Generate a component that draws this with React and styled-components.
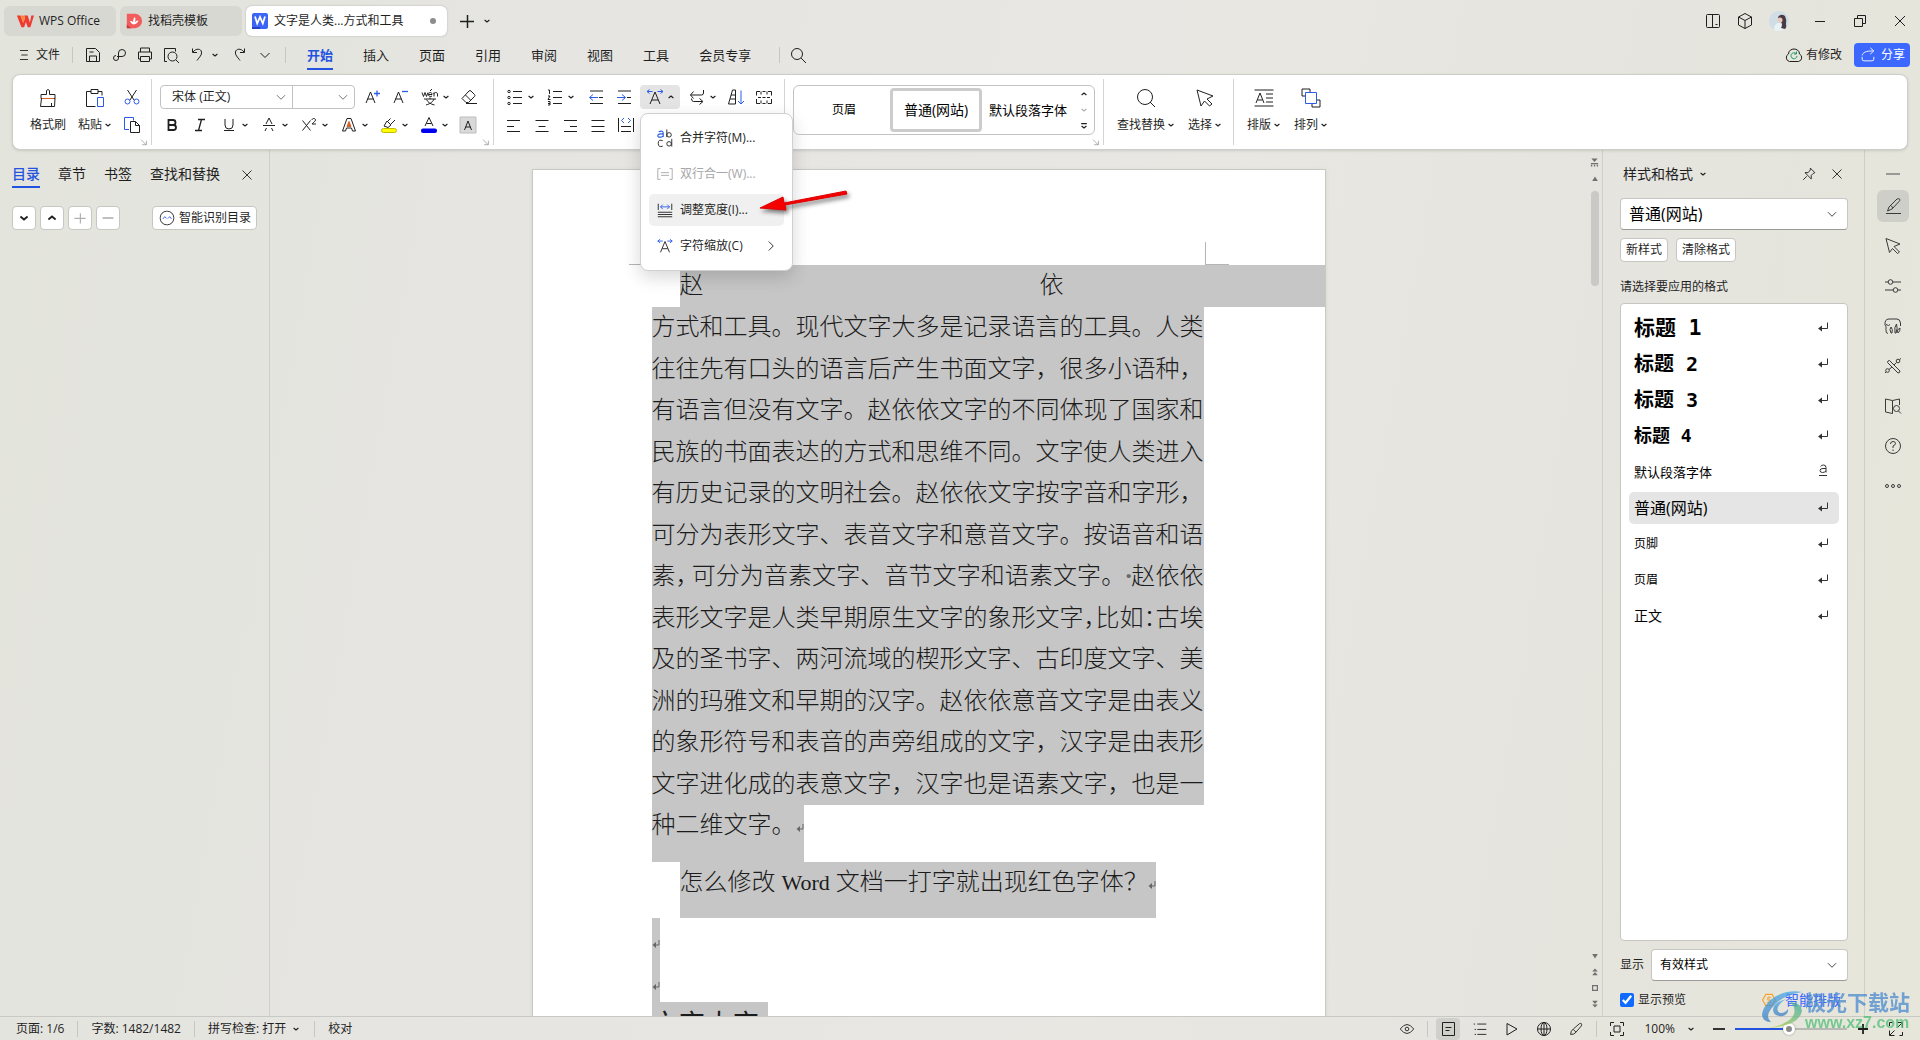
import React, { useState } from "react";
import styled, { createGlobalStyle, css } from "styled-components";

const BLUE = "#2b5be8";

const icons = {
    wps: <><path d="M1 4h4l3 8 2-5-1-3h4l2.500 8 1.500-8h3l-4 13h-3l-2-6-2 6h-3z" fill="#f0392f" stroke="none" /><path d="M5 4l3 8 2-5-1-3z" fill="#ff8a3c" stroke="none" /></>,
    docer: <><path d="M2 2h9a8 8 0 0 1 0 16h-9z" fill="#f25c5c" stroke="none" /><path d="M2 14l5 4h-5z" fill="#c93838" stroke="none" /><path d="M9.500 14c-2-1-3-2-4-4 2 0 3 .5 3.500 1.500 0-2 0-4 2-6 1 2 .5 4 0 6 1-1.500 2-2 4-2-1 2.500-2.500 4-5.500 4.500z" fill="#fff" stroke="none" /></>,
    word: <><rect x="2" y="2" width="16" height="16" rx="2" fill="#3c64f5" stroke="none" /><path d="M2 16h8v2h-8z" fill="#2143c4" stroke="none" /><path d="M5 5.500l2.200 7 2.800-6.500 2.800 6.500 2.200-7" stroke="#fff" strokeWidth="1.800" /></>,
    plus: <path d="M3 10.500h14M10.500 4v13" strokeWidth="1.500" />,
    burger: <path d="M5.500 5h9M7 10h7M5.500 15h9" />,
    save: <><path d="M3.500 3.500h9l4 4v9h-13z" /><path d="M6.500 16v-5h7v5M6.500 7h4" /></>,
    link: <path d="M8 11.500h5a3.500 3.500 0 1 0-3.500-3.500v5a2.500 2.500 0 1 1-2.500-2.500" />,
    print: <><path d="M5.500 7v-4h9v4M5.500 14h-2v-7h13v7h-2" /><path d="M5.500 11.500h9v5h-9z" /></>,
    preview: <><path d="M6 16.500h-2.500v-13h11v3" /><circle cx="11.500" cy="11.500" r="4.500" /><path d="M15 15l3 3" /></>,
    undo: <path d="M4.500 3.500v4h4.500M5 7c3-4 8-3.500 8.500 0 .5 3-2 5-4.500 8.500" />,
    redo: <path d="M15.500 3.500v4h-4.500M15 7c-3-4-8-3.500-8.500 0-.5 3 2 5 4.500 8.500" />,
    down: <path d="M5.500 8l4.500 4.500 4.500-4.500" />,
    search: <><circle cx="9" cy="9" r="5.500" /><path d="M13 13l5 5" /></>,
    panes: <><rect x="3.500" y="3.500" width="13" height="13" rx="1" /><path d="M9.500 4v12M12.500 13.500h2" /></>,
    cube: <><path d="M10 2.500l6.500 3.500v8l-6.500 3.500-6.500-3.500v-8z" /><path d="M3.500 6l6.500 3.500 6.500-3.500M10 9.500v8" /></>,
    min: <path d="M5 10.500h10" />,
    restore: <><path d="M4.500 7.500h8v8h-8z" /><path d="M7.500 7.500v-3h8v8h-3" /></>,
    close: <path d="M5 5l10 10M15 5l-10 10" />,
    cloud: <><path d="M5.500 16.500a4 4 0 0 1-1-7.500c0-3.500 3-5 5.500-5s5.500 1.500 5.500 5a4 4 0 0 1-1 7.500z" /><path d="M12 8.500a3 3 0 1 0 1 2.500M12.500 6.500v2.500h-2.500" stroke="#1f9d62" /></>,
    share: <><path d="M3.500 12v2.500q0 2 2 2h9q2 0 2-2v-2.500" /><path d="M3.500 10.500c1-3.500 4-5 12-5M12.500 2l4 3.500-4 3.500" /></>,
    eye: <><path d="M2.500 10q7.500-10 15 0-7.500 10-15 0z" /><circle cx="10" cy="10" r="2" /></>,
    painter: <><path d="M8.500 6.500v-4q1.500-2 3 0v4h5.500v4h-14v-4z" /><path d="M3.500 10.500l-1 8h14l.5-8M13.500 15v3" /><path d="M4 10.500h12" stroke="#d4622b" /></>,
    paste: <><path d="M6 3.500h-4.500v15h9M13 3.500h4v4" /><path d="M6 1.500h7v4h-7z" /><path d="M12.500 9.500h6v9h-6z" stroke={BLUE} /></>,
    cut: <><path d="M5.500 3l6.500 10M14.500 3l-6.500 10" /><circle cx="5.500" cy="14.500" r="2.500" stroke={BLUE} /><circle cx="14.500" cy="14.500" r="2.500" stroke={BLUE} /></>,
    copy: <><path d="M7 14.500h-4.500v-12h9v3" stroke={BLUE} /><path d="M8.500 6.500h5l4 4v7h-9z" /><path d="M13.500 6.500v4h4" /></>,
    grow: <><path d="M3 16l4.500-11 4.500 11M4.500 12h6" /><path d="M11 6.500h6M14 3.500v6" stroke={BLUE} strokeWidth="1.300" /></>,
    shrink: <><path d="M3 16l4.500-11 4.500 11M4.500 12h6" /><path d="M11 4.500h6" stroke={BLUE} strokeWidth="1.300" /></>,
    pinyin: <><path d="M2 5.500l1.500 4 1.500-4 1.500 4 1.500-4M8.500 7.500h3.500c0-3-3.500-2.500-3.500 0 0 2 2 2.500 3.500 1.500M14 9.500v-4M14 7c0-2 3.500-2 3.500 0v2.500M10 4l2-2M4 12h12M10 10.500v1.500M6 18c5-1.500 7-3.500 8-6M6.500 12.500c1.500 3 4 4.500 8 5.500" /></>,
    eraser: <><path d="M3 11.500l7-7.500q1-1 2 0l3.500 3.500q1 1 0 2l-6 6h-2.500z" /><path d="M6.500 8l5 5M7 16.500h11" /></>,
    bold: <path d="M6.500 5h4.500a2.300 2.300 0 0 1 0 5h-4.500zM6.500 10h5a2.500 2.500 0 0 1 0 5h-5z" strokeWidth="1.800" />,
    italic: <path d="M8 4.500h7M5 15.500h7M11.500 4.500l-3 11" strokeWidth="1.300" />,
    underline: <path d="M6 4v6a4 4 0 0 0 8 0v-6M5 15.500h10" />,
    strike: <path d="M4 10.500h12M7 9l3-6 3 6M6 16l1.500-3M14 16l-1.500-3" />,
    sup: <path d="M3.500 5.500l8 10M11.500 5.500l-8 10M13 5c0-2 3.500-2 3.500 0 0 1.500-2 2-3.500 4h4" />,
    effect: <><path d="M3.500 16l4.500-12.500h4l4.500 12.500h-3l-1-3h-5l-1 3z" /><path d="M8 11.500l2-5 2 5z" fill="#d4622b" stroke="#d4622b" /></>,
    marker: <><path d="M5 11l3-5 4 4-3 2.500zM8.500 6.500l3-3M11 10l5-5" /><rect x="2.500" y="13.500" width="15" height="4" rx="2" fill="#ffff00" stroke="#c5b800" /></>,
    color: <><path d="M6 11l4-8.500 4 8.500M7.500 8.500h5" /><rect x="2" y="13.500" width="16" height="4.500" rx="2" fill="#0000f0" stroke="none" /></>,
    shade: <><path d="M2 2h16v16h-16z" fill="#d9d9d9" stroke="#bdbdbd" /><path d="M6.500 15l3.500-9 3.500 9M7.500 12h5" /></>,
    bullets: <><path d="M8 4.500h9M8 10.500h9M8 16.500h9" /><circle cx="4" cy="4.500" r="1.200" /><circle cx="4" cy="10.500" r="1.200" /><circle cx="4" cy="16.500" r="1.200" /></>,
    numbers: <path d="M8 4.500h9M8 10.500h9M8 16.500h9M3 3h1.500v4M3 9h2l-2 3.500h2.500M3 14.500h2v3.500h-2M3 16.500h2" />,
    outdent: <><path d="M4 4h13M13 10.500h4M4 16.500h13" /><path d="M12 10.500h-8M7 7.500l-3.500 3 3.500 3" stroke={BLUE} /></>,
    indent: <><path d="M4 4h13M13 10.500h4M4 16.500h13" /><path d="M3 10.500h8M8 7.500l3.500 3-3.500 3" stroke={BLUE} /></>,
    charWidth: <><path d="M5 17l5-12 5 12M7 13h6" /><path d="M2 4.500h5.500M4.500 2.500l-2.500 2 2.500 2M12.500 4.500h5.500M15.500 2.500l2.500 2-2.500 2" stroke={BLUE} /></>,
    direction: <path d="M16.500 3v3q0 2-2 2h-11M6.500 4.500l-3 3.500 3 3.500M4.500 11.500q0 3 2 3h9M12.500 11.500l3.500 3-3.500 3" />,
    sort: <><path d="M2.500 17l4-14h3v14zM4 12h5M5 8h4" /><path d="M15 3.500v13.500M12 14l3 3 3-3" stroke={BLUE} /></>,
    tabs: <path d="M6 4.500h-3.500v4M2.500 12v4.500h3.500M14 4.500h3.500v4M17.500 12v4.500h-3.500M8.500 4.500h3M8.500 16.500h3M4 10.500h3M8.500 10.500h3M13 10.500h3M7 4.500v3M7 13.500v3M13 4.500v3M13 13.500v3" />,
    left: <path d="M3 5.500h13M3 11.500h7M3 16.500h13" />,
    center: <path d="M3.500 5.500h13M6.500 11.500h7M3.500 16.500h13" />,
    right: <path d="M4 5.500h13M10 11.500h7M4 16.500h13" />,
    justify: <path d="M3.500 5.500h13M3.500 11.500h13M3.500 16.500h13" />,
    spread: <><path d="M2.500 3v14M17.500 3v14M5 11.500h10M5 16.500h10" /><path d="M8 3l-2.500 2.500 2.500 2.500M12 3l2.500 2.500-2.500 2.500" stroke={BLUE} /></>,
    lens: <><circle cx="9" cy="9" r="7.500" /><path d="M14 14l5 5" /></>,
    pointer: <path d="M2 2l16 6-6 3 5 5-2.500 2-5-5-3.500 5z" />,
    typeset: <path d="M.5 2h19M.5 18h19M2 15l4-10 4 10M3.500 12h5M12 6h7M12 10h7M12 14h7" />,
    arrange: <><path d="M4 8h-3v-7h8v3M16 12h3v7h-8v-3" /><path d="M4.500 4.500h11v11h-11z" stroke={BLUE} /></>,
    merge: <><path d="M3 3q5-2 5 2v4M8 5.500h-3q-3 0-3 2 0 2 3 1.500 3 0 3-2" stroke={BLUE} strokeWidth="1.300" /><path d="M12 .5v8.500" /><circle cx="14.500" cy="6.500" r="2.500" /><path d="M7.500 13q-5-2-5 3t5 3M17.500 11v8.500" /><circle cx="14.500" cy="16.500" r="2.500" /></>,
    twoLines: <path d="M5 4h-3v12h3M15 4h3v12h-3M5.500 8.500h9M5.500 11.500h9" />,
    fitWidth: <><path d="M2.500 3v7M17.500 3v7M2 12.500h16M2 15h16M2 17.500h16" /><path d="M5 6.500h10M7.500 4l-2.500 2.500 2.500 2.500M12.500 4l2.500 2.500-2.500 2.500" stroke={BLUE} /></>,
    next: <path d="M7.500 5l5 5-5 5" />,
    chip: <><rect x="2.500" y="2.500" width="15" height="15" rx="7" /><path d="M5.500 11l2-2.500 2 2M11 10.500l2-2 2 2.500" stroke={BLUE} /></>,
    pin: <path d="M11.500 3.500l5 5-2 1-2 2v4l-7-7h3.500l2.500-3zM7.500 12.500l-4 4" />,
    brush: <><path d="M6 11l8-8q2-1 3 .5 0 1-1 2l-7 7.500-4.500 2z" /><path d="M8 9.500l2 2.500M3 17.500h15" /></>,
    cursor: <path d="M3 2.500l14 5.500-6 2.500 5.500 5.500-2 1.500-5-5-3 4z" />,
    sliders: <><path d="M2 6h3M10 6h8M2 14h8M15 14h3" /><circle cx="7.500" cy="6" r="2.300" /><circle cx="12.500" cy="14" r="2.300" /></>,
    plant: <><path d="M5 17.500q-2.500 0-2-4v-3l-1-1.500q-.5-6 4-6h8q3 0 3.500 4v3" /><path d="M3 8.500q3 2 4 0M8 17q-2-4 0-6 2 2 1 6zM12 17q-1-6 1.500-9 1.500 4-.5 9zM14 17q0-4 3-5 .5 3-2 5" /></>,
    tools: <><path d="M6.500 4.500l10.500 10.500q0 2-2 2l-10.500-10.500q0-2 2-2z" /><circle cx="15" cy="5" r="1.800" /><circle cx="4.500" cy="14.500" r="1.800" /><path d="M16.500 3.500l1.500-1M3 16l-1 1M9 11l-3 2.500M11 9l2.500-2.500" /></>,
    book: <><path d="M9.500 4.500l-7-1.500v13l7 1.500v-13l7-1.500v6" /><circle cx="13.500" cy="12.500" r="3" /><path d="M15.500 15l2.500 2.500" /></>,
    help: <><circle cx="10" cy="10" r="7.500" /><path d="M7.500 8q0-2.500 2.500-2.500t2.500 2q0 1.500-2.500 2.500v2M10 13.500v1.500" /></>,
    more: <><circle cx="4" cy="10" r="1.500" /><circle cx="10" cy="10" r="1.500" /><circle cx="16" cy="10" r="1.500" /></>,
    pageView: <path d="M4.500 3.500h12v13h-12zM7.500 8.500h6M7.500 11.500h4" />,
    outline: <path d="M7 4.500h10M7 10.500h10M7 16h10M3 4.500h1.500M4 10.500h1.500M4 16h1.500" />,
    play: <path d="M5 4.500l10 5.500-10 6z" />,
    globe: <><circle cx="10" cy="10" r="6.500" /><ellipse cx="10" cy="10" rx="3" ry="6.500" /><path d="M3.500 10h13M10 3.500v13" /></>,
    pen: <path d="M4 16q0-4 3-6l7-6q3-1 2 2.500l-6 7q-2 3-6 2.500zM7 10.500l3 3" />,
    fit: <path d="M3.500 7v-3.500h3.500M13 3.500h3.500v3.500M16.500 13v3.500h-3.500M7 16.500h-3.500v-3.500M7 7h6v6h-6z" />,
    minusBold: <path d="M4 10h12" strokeWidth="1.800" />,
    plusBold: <path d="M5 10h10M10 5v10" strokeWidth="1.800" />,
    expand: <path d="M11.500 3.500h5v5M16 4l-4.500 4.500M8.500 16.500h-5v-5M4 16l4.500-4.500M3.500 7v-3.500h3M16.500 13v3.500h-3" />,
    enter: <><path d="M14.500 4.500v6h-8" /><path d="M5 10.500l4-3v6z" fill="currentColor" stroke="none" /></>,
    fontMark: <path d="M7.500 4.500q1-1.500 3-1.500 2.500 0 2.500 2.500v5M13 6.500h-3q-3 0-3 2t2.500 2q2 0 3.500-1.500M6 13.500h8" />,
    coin: <><path d="M6 3h8l4 7-4 7h-8l-4-7z" stroke="#f6a32c" strokeWidth="1.500" /><path d="M13 7h-5v3h4v3h-5M10 5v10" stroke="#f6a32c" /></>,
    corner: <path d="M5 6l8 8M14 8v6.500h-7" stroke="#777" />,
    caret: <path d="M4 7.500l6 5 6-5" strokeWidth="3" />,
    caretUp: <path d="M4 12.500l6-5 6 5" strokeWidth="3" />,
    caretLine: <path d="M3 4h14M4 10l6 5 6-5" strokeWidth="3" />,
    triUp: <path d="M10 4l7 11h-14z" fill="currentColor" stroke="none" />,
    triDown: <path d="M10 16l7-11h-14z" fill="currentColor" stroke="none" />,
    pageUp: <path d="M10 1l7 8h-14zM10 10l7 8h-14z" fill="currentColor" stroke="none" />,
    pageDown: <path d="M10 10l7-8h-14zM10 19l7-8h-14z" fill="currentColor" stroke="none" />,
    square: <path d="M4 4h12v12h-12z" strokeWidth="3" />,
    ruler: <path d="M3 1h14l-7 8zM2 11h16v3h-16zM2 15h3v4h-3zM8.500 15h3v4h-3zM15 15h3v4h-3z" fill="currentColor" stroke="none" />,
};

const Svg = styled.svg`
    width: ${p => p.$size}px;
    height: ${p => p.$size}px;
    flex: none;
    display: block;
    fill: none;
    stroke: currentColor;
`;

const Icon = ({ name, size = 20 }) => (
    <Svg $size={size} viewBox="0 0 20 20" aria-hidden="true">{icons[name]}</Svg>
);

const mainTabs = ["开始", "插入", "页面", "引用", "审阅", "视图", "工具", "会员专享"];

const Half = styled.span`
    font-feature-settings: "halt";
    margin-right: ${p => p.$loose ? 4 : 0}px;
`;

const Dot = styled.span`
    display: inline-block;
    width: 6px;
    color: #666;
    font-family: "Open Sans", sans-serif;
    font-weight: 700;
`;

const docLines = [
    "方式和工具。现代文字大多是记录语言的工具。人类",
    "往往先有口头的语言后产生书面文字，很多小语种，",
    "有语言但没有文字。赵依依文字的不同体现了国家和",
    "民族的书面表达的方式和思维不同。文字使人类进入",
    "有历史记录的文明社会。赵依依文字按字音和字形，",
    "可分为表形文字、表音文字和意音文字。按语音和语",
    <>素<Half $loose>，</Half>可分为音素文字、音节文字和语素文字。<Dot>·</Dot>赵依依</>,
    <>表形文字是人类早期原生文字的象形文字<Half>，</Half>比如<Half>：</Half>古埃</>,
    "及的圣书字、两河流域的楔形文字、古印度文字、美",
    "洲的玛雅文和早期的汉字。赵依依意音文字是由表义",
    "的象形符号和表音的声旁组成的文字，汉字是由表形",
    "文字进化成的表意文字，汉字也是语素文字，也是一",
];

const styleList = [
    { name: "标题 1", size: 21, bold: true },
    { name: "标题 2", size: 20, bold: true },
    { name: "标题 3", size: 20, bold: true },
    { name: "标题 4", size: 18, bold: true },
    { name: "默认段落字体", size: 13, mark: "fontMark" },
    { name: "普通(网站)", size: 16 },
    { name: "页脚", size: 12 },
    { name: "页眉", size: 12 },
    { name: "正文", size: 14 },
];

const sideTools = ["brush", "cursor", "sliders", "plant", "tools", "book", "help", "more"];

const Tool = ({ icon, label }) => (
    <ToolButton aria-label={label || icon}><Icon name={icon} /></ToolButton>
);

const SplitTool = ({ icon, label, active }) => (
    <SplitButton aria-label={label || icon} $active={active}>
        <Icon name={icon} /><Icon name={active ? "caretUp" : "caret"} size={8} />
    </SplitButton>
);

const BigTool = ({ icon, text, caret }) => (
    <BigButton>
        <Icon name={icon} />
        <span>{text}{caret && <Icon name="caret" size={8} />}</span>
    </BigButton>
);

const Dropdown = ({ label, value, ...rest }) => (
    <SelectBox {...rest}>
        <select aria-label={label} defaultValue={value}>
            <option>{value}</option>
        </select>
        <Icon name="down" size={18} />
    </SelectBox>
);

const Return = () => (
    <ReturnMark viewBox="0 0 8 10" aria-hidden="true">
        <path d="M7 1v5h-4" fill="none" stroke="#666" />
        <path d="M4 3v6l-3.500-3z" fill="#666" />
    </ReturnMark>
);

const App = () => {
    const [tab, setTab] = useState("开始");
    const [current, setCurrent] = useState("普通(网站)");
    const [preview, setPreview] = useState(true);
    const [zoom, setZoom] = useState(48);

    return (
        <Window>
            <GlobalStyle />
            <TitleBar>
                <HomeTab><Icon name="wps" size={18} />WPS Office</HomeTab>
                <DocerTab><Icon name="docer" size={18} />找稻壳模板</DocerTab>
                <FileTab><Icon name="word" size={20} /><span>文字是人类...方式和工具</span><Unsaved /></FileTab>
                <NewTab aria-label="新建"><Icon name="plus" /></NewTab>
                <PlainButton aria-label="更多标签"><Icon name="caret" size={8} /></PlainButton>
                <Spacer />
                <WindowTools>
                    <PlainButton aria-label="布局"><Icon name="panes" /></PlainButton>
                    <PlainButton aria-label="应用"><Icon name="cube" /></PlainButton>
                    <Avatar viewBox="0 0 20 20" aria-hidden="true">
                        <circle cx="10" cy="10" r="10" fill="#cfdde6" />
                        <path d="M5 19q0-6 4-7 4 0 5 4l1 3q-5 2-10 0z" fill="#e8f2f5" />
                        <path d="M9 6q3-4 7-1 2 4 1 8 1 3-1 5l-4-1q2-4 0-6-2 0-3-5z" fill="#4a3a42" />
                        <circle cx="11" cy="9" r="2.500" fill="#ecc9bb" />
                    </Avatar>
                </WindowTools>
                <WindowControls>
                    <PlainButton aria-label="最小化"><Icon name="min" /></PlainButton>
                    <PlainButton aria-label="还原"><Icon name="restore" /></PlainButton>
                    <PlainButton aria-label="关闭"><Icon name="close" /></PlainButton>
                </WindowControls>
            </TitleBar>

            <MenuBar>
                <FileMenu><Icon name="burger" size={18} />文件</FileMenu>
                <Rule />
                <QuickTools>
                    <PlainButton aria-label="保存"><Icon name="save" /></PlainButton>
                    <PlainButton aria-label="分享链接"><Icon name="link" /></PlainButton>
                    <PlainButton aria-label="打印"><Icon name="print" /></PlainButton>
                    <PlainButton aria-label="打印预览"><Icon name="preview" /></PlainButton>
                    <UndoButton aria-label="撤销"><Icon name="undo" /><Icon name="caret" size={8} /></UndoButton>
                    <PlainButton aria-label="恢复"><Icon name="redo" /></PlainButton>
                    <PlainButton aria-label="自定义"><Icon name="down" /></PlainButton>
                </QuickTools>
                <Rule />
                <MainTabs>
                    {mainTabs.map(name =>
                        <MainTab key={name} $active={tab === name} onClick={() => setTab(name)}>{name}</MainTab>
                    )}
                </MainTabs>
                <Rule />
                <SearchButton aria-label="搜索"><Icon name="search" /></SearchButton>
                <Spacer />
                <SyncButton><Icon name="cloud" />有修改</SyncButton>
                <ShareButton><Icon name="share" size={18} />分享</ShareButton>
            </MenuBar>

            <Ribbon>
                <ClipGroup>
                    <BigTool icon="painter" text="格式刷" />
                    <BigTool icon="paste" text="粘贴" caret />
                    <ClipRows><Tool icon="cut" /><Tool icon="copy" /></ClipRows>
                    <Launcher aria-label="剪贴板设置"><Icon name="corner" size={12} /></Launcher>
                </ClipGroup>
                <FontGroup>
                    <Rows>
                        <Row>
                            <FontFields>
                                <Dropdown label="字体" value="宋体 (正文)" />
                                <Dropdown label="字号" value="" />
                            </FontFields>
                            <Tool icon="grow" /><Tool icon="shrink" />
                            <SplitTool icon="pinyin" />
                            <Tool icon="eraser" />
                        </Row>
                        <Row>
                            <Tool icon="bold" /><Tool icon="italic" />
                            <SplitTool icon="underline" />
                            <SplitTool icon="strike" />
                            <SplitTool icon="sup" />
                            <SplitTool icon="effect" />
                            <SplitTool icon="marker" />
                            <SplitTool icon="color" />
                            <Tool icon="shade" />
                        </Row>
                    </Rows>
                    <Launcher aria-label="字体设置"><Icon name="corner" size={12} /></Launcher>
                </FontGroup>
                <Group>
                    <Rows>
                        <ListRow>
                            <SplitTool icon="bullets" /><SplitTool icon="numbers" />
                            <Tool icon="outdent" /><Tool icon="indent" />
                            <MenuAnchor>
                                <SplitTool icon="charWidth" label="中文版式" active />
                                <Menu role="menu">
                                    <MenuItem role="menuitem"><Icon name="merge" size={18} />合并字符(M)...</MenuItem>
                                    <MenuItem role="menuitem" disabled><Icon name="twoLines" size={18} />双行合一(W)...</MenuItem>
                                    <MenuItem role="menuitem" $hover><Icon name="fitWidth" size={18} />调整宽度(I)...</MenuItem>
                                    <MenuItem role="menuitem"><Icon name="charWidth" size={18} />字符缩放(C)<Spacer /><Icon name="next" size={18} /></MenuItem>
                                </Menu>
                                <Pointer viewBox="0 0 96 32" aria-hidden="true">
                                    <path d="M87 3l-62 12-1-6L1 20l26 2-1-5L88 6z" fill="#f40000" stroke="#e00000" strokeWidth="1" />
                                </Pointer>
                            </MenuAnchor>
                            <SplitTool icon="direction" />
                            <Tool icon="sort" /><Tool icon="tabs" />
                        </ListRow>
                        <Row>
                            <Tool icon="left" /><Tool icon="center" /><Tool icon="right" />
                            <Tool icon="justify" /><Tool icon="spread" />
                        </Row>
                    </Rows>
                </Group>
                <StyleGroup>
                    <Gallery>
                        <GalleryItem $size={12}>页眉</GalleryItem>
                        <GalleryItem $size={14} $active>普通(网站)</GalleryItem>
                        <GalleryItem $size={13}>默认段落字体</GalleryItem>
                        <GalleryScroll>
                            <PlainButton aria-label="上一行"><Icon name="caretUp" size={8} /></PlainButton>
                            <PlainButton aria-label="下一行" disabled><Icon name="caret" size={8} /></PlainButton>
                            <PlainButton aria-label="更多样式"><Icon name="caretLine" size={8} /></PlainButton>
                        </GalleryScroll>
                    </Gallery>
                    <Launcher aria-label="样式设置"><Icon name="corner" size={12} /></Launcher>
                </StyleGroup>
                <ToolGroup>
                    <BigTool icon="lens" text="查找替换" caret />
                    <BigTool icon="pointer" text="选择" caret />
                </ToolGroup>
                <ToolGroup>
                    <BigTool icon="typeset" text="排版" caret />
                    <BigTool icon="arrange" text="排列" caret />
                </ToolGroup>
            </Ribbon>

            <Body>
                <NavPane>
                    <NavTabs>
                        <NavTab $active>目录</NavTab>
                        <NavTab>章节</NavTab>
                        <NavTab>书签</NavTab>
                        <NavTab>查找和替换</NavTab>
                        <PlainButton aria-label="关闭导航"><Icon name="close" size={18} /></PlainButton>
                    </NavTabs>
                    <NavTools>
                        <SmallButton aria-label="展开"><Icon name="caret" size={12} /></SmallButton>
                        <SmallButton aria-label="收起"><Icon name="caretUp" size={12} /></SmallButton>
                        <SmallButton aria-label="增加" disabled><Icon name="plus" size={16} /></SmallButton>
                        <SmallButton aria-label="减少" disabled><Icon name="minusBold" size={18} /></SmallButton>
                        <Spacer />
                        <TextButton><Icon name="chip" size={18} />智能识别目录</TextButton>
                    </NavTools>
                </NavPane>

                <Canvas>
                    <Page>
                        <CropMarks><i /><b /></CropMarks>
                        <FirstLine><span>赵</span><span>依</span></FirstLine>
                        <Paragraph>
                            {docLines.map((line, i) => <Line key={i}>{line}</Line>)}
                        </Paragraph>
                        <LastLine>种二维文字。<Return /></LastLine>
                        <Question>怎么修改<Latin>Word</Latin>文档一打字就出现红色字体？<Return /></Question>
                        <EmptyLine><Return /></EmptyLine>
                        <EmptyLine><Return /></EmptyLine>
                        <Heading>文字大字</Heading>
                    </Page>
                </Canvas>

                <ScrollRail>
                    <Icon name="ruler" size={9} />
                    <Icon name="triUp" size={8} />
                    <Thumb />
                    <Spacer />
                    <Icon name="triDown" size={8} />
                    <Icon name="pageUp" size={8} />
                    <Icon name="square" size={8} />
                    <Icon name="pageDown" size={8} />
                </ScrollRail>

                <StylePane>
                    <PaneHead>
                        样式和格式<Icon name="caret" size={8} />
                        <Spacer />
                        <PlainButton aria-label="固定"><Icon name="pin" size={18} /></PlainButton>
                        <PlainButton aria-label="关闭"><Icon name="close" size={18} /></PlainButton>
                    </PaneHead>
                    <StyleSelect label="当前样式" value="普通(网站)" />
                    <ButtonRow>
                        <TextButton>新样式</TextButton>
                        <TextButton>清除格式</TextButton>
                    </ButtonRow>
                    <Caption>请选择要应用的格式</Caption>
                    <StyleBox>
                        {styleList.map(s =>
                            <StyleItem
                                key={s.name}
                                $size={s.size}
                                $bold={s.bold}
                                $active={current === s.name}
                                onClick={() => setCurrent(s.name)}
                            >
                                {s.name}<Icon name={s.mark || "enter"} />
                            </StyleItem>
                        )}
                    </StyleBox>
                    <ShowRow>
                        显示<ShowSelect label="显示" value="有效样式" />
                    </ShowRow>
                    <PreviewRow>
                        <input
                            id="preview"
                            type="checkbox"
                            checked={preview}
                            onChange={e => setPreview(e.target.checked)}
                        />
                        <label htmlFor="preview">显示预览</label>
                        <Spacer />
                        <Icon name="coin" size={16} />
                        <a href="#typeset">智能排版</a>
                    </PreviewRow>
                </StylePane>

                <SideBar>
                    <Dash />
                    {sideTools.map((name, i) =>
                        <SideButton key={name} aria-label={name} $active={i === 0}><Icon name={name} /></SideButton>
                    )}
                </SideBar>
            </Body>

            <StatusBar>
                <span>页面: 1/6</span><Rule />
                <span>字数: 1482/1482</span><Rule />
                <SpellButton>拼写检查: 打开<Icon name="caret" size={8} /></SpellButton><Rule />
                <span>校对</span>
                <Spacer />
                <ViewTools>
                    <ViewButton aria-label="护眼模式"><Icon name="eye" size={18} /></ViewButton>
                    <Rule />
                    <ViewButton aria-label="页面视图" $active><Icon name="pageView" /></ViewButton>
                    <ViewButton aria-label="大纲"><Icon name="outline" size={18} /></ViewButton>
                    <ViewButton aria-label="阅读"><Icon name="play" /></ViewButton>
                    <ViewButton aria-label="网页视图"><Icon name="globe" /></ViewButton>
                    <ViewButton aria-label="写作模式"><Icon name="pen" size={18} /></ViewButton>
                    <Rule />
                    <ViewButton aria-label="适合页面"><Icon name="fit" /></ViewButton>
                </ViewTools>
                <ZoomTools>
                    <ZoomButton>100%<Icon name="caret" size={8} /></ZoomButton>
                    <PlainButton aria-label="缩小"><Icon name="minusBold" /></PlainButton>
                    <ZoomRange
                        type="range"
                        aria-label="缩放"
                        value={zoom}
                        onChange={e => setZoom(Number(e.target.value))}
                    />
                    <PlainButton aria-label="放大"><Icon name="plusBold" /></PlainButton>
                </ZoomTools>
                <PlainButton aria-label="全屏"><Icon name="expand" /></PlainButton>
            </StatusBar>

            <Watermark>
                <svg viewBox="0 0 44 40" width="44" height="40" aria-hidden="true">
                    <defs>
                        <linearGradient id="swirl" x1="0" y1="0" x2="0" y2="1">
                            <stop offset="0" stopColor="#4aa8e8" />
                            <stop offset="1" stopColor="#3c7fc4" />
                        </linearGradient>
                        <linearGradient id="leaf" x1="1" y1="0" x2="0" y2="1">
                            <stop offset="0" stopColor="#35a8a0" />
                            <stop offset="1" stopColor="#c5d849" />
                        </linearGradient>
                    </defs>
                    <path d="M41 2C20-2 2 12 1 25q1 7 9 7-6-5 0-13Q20 5 41 2z" fill="url(#swirl)" />
                    <path d="M26 9q-14 3-14 11 1 7 10 6 6-2 5-7-3 4-7 4-5-1-3-6 3-6 9-8z" fill="url(#swirl)" />
                    <path d="M29 12q12 1 12 9Q38 36 7 38q22-4 26-14 2-7-4-12z" fill="url(#leaf)" />
                </svg>
                <div><strong>极光下载站</strong><em>www.xz7.com</em></div>
            </Watermark>
        </Window>
    )
}

const GlobalStyle = createGlobalStyle`
    * { box-sizing: border-box; }
    body {
        margin: 0;
        color: #1f1f1f;
        font: 12px/16px "Open Sans", "Noto Sans CJK SC", sans-serif;
        background: linear-gradient(100deg, #e3e4dc 0%, #e6e5e2 30%, #e8e7e2 60%, #e5e4de 80%, #e7e6da 100%);
    }
    button, input, select { font: inherit; color: inherit; }
    button { border: 0; padding: 0; margin: 0; background: none; white-space: nowrap; }
`;

const Window = styled.div`
    position: relative;
    height: 100vh;
    display: flex;
    flex-direction: column;
    overflow: hidden;
`;

const Spacer = styled.span`
    flex: 1;
`;

const Rule = styled.span`
    width: 1px;
    height: 16px;
    flex: none;
    background: #c6c6c2;
`;

const PlainButton = styled.button`
    display: flex;
    align-items: center;
    justify-content: center;
    &:disabled { color: #b0b0b0; }
`;

/* title bar */

const TitleBar = styled.header`
    height: 38px;
    padding: 6px 10px 2px 4px;
    display: flex;
    align-items: center;
`;

const HomeTab = styled.button`
    height: 30px;
    display: flex;
    align-items: center;
    border-radius: 6px;
    background: #d8d8d2;
    width: 112px;
    padding-left: 12px;
    gap: 5px;
    margin-right: 4px;
`;

const DocerTab = styled(HomeTab)`
    width: 122px;
    padding-left: 5px;
`;

const FileTab = styled(HomeTab)`
    width: 201px;
    padding: 0 11px 0 4px;
    margin-right: 10px;
    gap: 4px;
    background: #fff;
    box-shadow: 0 0 2px #aaa;
    span { flex: 1; text-align: left; }
`;

const Unsaved = styled.i`
    width: 6px;
    height: 6px;
    border-radius: 50%;
    background: #8c8c8c;
`;

const NewTab = styled(PlainButton)`
    margin-right: 6px;
`;

const WindowTools = styled.div`
    display: flex;
    gap: 12px;
    margin-right: 21px;
`;

const Avatar = styled.svg`
    width: 20px;
    height: 20px;
    margin-left: 2px;
`;

const WindowControls = styled.div`
    display: flex;
    gap: 20px;
`;

/* menu bar */

const MenuBar = styled.nav`
    height: 36px;
    padding: 0 10px 2px 15px;
    display: flex;
    align-items: center;
`;

const FileMenu = styled(PlainButton)`
    gap: 3px;
    margin-right: 12px;
`;

const QuickTools = styled.div`
    display: flex;
    align-items: center;
    gap: 6px;
    margin: 0 10px;
`;

const UndoButton = styled(PlainButton)`
    gap: 3px;
    margin-right: 4px;
    padding-left: 1px;
`;

const MainTabs = styled.div`
    display: flex;
    gap: 30px;
    margin: 0 28px 0 21px;
`;

const MainTab = styled.button`
    height: 28px;
    margin-top: 2px;
    font-size: 13px;
    border-bottom: 2px solid transparent;
    ${p => p.$active && css`
        color: #2453e0;
        font-weight: 700;
        border-color: #2453e0;
    `}
`;

const SearchButton = styled(PlainButton)`
    margin-left: 8px;
`;

const SyncButton = styled(PlainButton)`
    gap: 2px;
    margin-right: 12px;
`;

const ShareButton = styled(PlainButton)`
    width: 56px;
    height: 24px;
    gap: 4px;
    border-radius: 4px;
    color: #fff;
    background: #3c68ff;
`;

/* ribbon */

const Ribbon = styled.div`
    position: relative;
    z-index: 2;
    flex: none;
    height: 76px;
    margin: 0 12px;
    padding: 4px 0;
    display: flex;
    border: 1px solid #cdcdc9;
    border-radius: 8px;
    background: #fff;
    box-shadow: 0 1px 3px rgba(0, 0, 0, 0.12);
`;

const Group = styled.div`
    position: relative;
    display: flex;
    align-items: flex-start;
    padding: 4px 6px;
    border-right: 1px solid #d4d4d4;
`;

const ClipGroup = styled(Group)`
    padding: 4px 5px 4px 17px;
    gap: 12px;
`;

const FontGroup = styled(Group)`
    padding: 4px 10px 4px 6px;
`;

const StyleGroup = styled(Group)`
    padding: 6px 8px;
`;

const ToolGroup = styled(Group)`
    padding: 4px 11px 4px 13px;
    gap: 13px;
    &:last-child { border: 0; }
`;

const Rows = styled.div`
    display: flex;
    flex-direction: column;
`;

const ClipRows = styled(Rows)`
    margin-left: -6px;
`;

const Row = styled.div`
    height: 28px;
    display: flex;
    align-items: center;
`;

const ListRow = styled(Row)`
    > button:nth-of-type(2) { margin-right: 2px; }
`;

const ToolButton = styled(PlainButton)`
    width: 28px;
    height: 28px;
`;

const SplitButton = styled(PlainButton)`
    width: 40px;
    height: 24px;
    gap: 2px;
    border-radius: 4px;
    background: ${p => p.$active ? "#e4e4e4" : "none"};
`;

const BigButton = styled.button`
    display: flex;
    flex-direction: column;
    align-items: center;
    gap: 9px;
    padding-top: 5px;
    span { display: flex; align-items: center; gap: 2px; }
`;

const Launcher = styled(PlainButton)`
    position: absolute;
    right: 1px;
    bottom: -3px;
`;

const SelectBox = styled.div`
    display: grid;
    align-items: center;
    flex: 1;
    select {
        grid-area: 1 / 1;
        appearance: none;
        width: 100%;
        height: 100%;
        padding: 0 24px 0 11px;
        border: 0;
        background: none;
        outline: none;
    }
    svg {
        grid-area: 1 / 1;
        justify-self: end;
        margin-right: 2px;
        pointer-events: none;
        color: #666;
    }
`;

const FontFields = styled.div`
    width: 195px;
    height: 24px;
    margin: 0 4px 0 2px;
    display: flex;
    border: 1px solid #c2c2c2;
    border-radius: 4px;
    ${SelectBox} + ${SelectBox} {
        flex: 0 0 62px;
        border-left: 1px solid #c2c2c2;
    }
`;

const MenuAnchor = styled.div`
    position: relative;
    margin: 0 2px;
`;

const Menu = styled.div`
    position: absolute;
    top: 28px;
    left: 0;
    width: 153px;
    padding: 8px;
    display: flex;
    flex-direction: column;
    gap: 4px;
    border: 1px solid #d0d0d0;
    border-radius: 8px;
    background: #fff;
    box-shadow: 0 6px 18px rgba(0, 0, 0, 0.16);
`;

const MenuItem = styled.button`
    height: 32px;
    padding: 0 4px 0 7px;
    display: flex;
    align-items: center;
    gap: 6px;
    border-radius: 5px;
    background: ${p => p.$hover ? "#f0f0f0" : "none"};
    &:disabled { color: #a6a6a6; }
`;

const Pointer = styled.svg`
    position: absolute;
    top: 103px;
    left: 119px;
    width: 96px;
    height: 32px;
    filter: drop-shadow(2px 3px 2px rgba(0, 0, 0, 0.5));
`;

const Gallery = styled.div`
    height: 50px;
    padding-left: 4px;
    display: flex;
    align-items: center;
    border: 1px solid #c2c2c2;
    border-radius: 6px;
`;

const GalleryItem = styled.button`
    width: 92px;
    height: 44px;
    border: 3px solid ${p => p.$active ? "#cccccc" : "transparent"};
    border-radius: 4px;
    color: #000;
    font-size: ${p => p.$size}px;
`;

const GalleryScroll = styled.div`
    width: 20px;
    height: 40px;
    display: flex;
    flex-direction: column;
    align-items: center;
    justify-content: space-between;
`;

/* body */

const Body = styled.main`
    flex: 1;
    min-height: 0;
    display: flex;
`;

const NavPane = styled.aside`
    width: 270px;
    flex: none;
    padding: 12px;
    border-right: 1px solid #cfcfca;
`;

const NavTabs = styled.div`
    height: 26px;
    display: flex;
    align-items: center;
    gap: 18px;
`;

const NavTab = styled.button`
    height: 26px;
    font-size: 14px;
    border-bottom: 2px solid transparent;
    ${p => p.$active && css`
        color: #2453e0;
        font-weight: 500;
        border-color: #2453e0;
    `}
`;

const NavTools = styled.div`
    display: flex;
    gap: 4px;
    margin-top: 18px;
`;

const TextButton = styled(PlainButton)`
    height: 24px;
    padding: 0 5px;
    gap: 3px;
    border: 1px solid #c6c6c2;
    border-radius: 4px;
    background: #fff;
`;

const SmallButton = styled(TextButton)`
    width: 24px;
    padding: 0;
`;

const Canvas = styled.section`
    flex: 1;
    display: flex;
    justify-content: center;
    align-items: flex-start;
    padding-top: 19px;
    overflow: hidden;
`;

const Page = styled.article`
    width: 794px;
    min-height: 1100px;
    flex: none;
    padding: 72px 0 0 119px;
    border: 1px solid #c8c8c4;
    background: #fff;
    box-shadow: 0 1px 4px rgba(0, 0, 0, 0.08);
    color: #1c1c1c;
    font: 300 24px/36px "Noto Sans CJK SC", sans-serif;
`;

const CropMarks = styled.div`
    height: 23px;
    width: 600px;
    margin-left: -23px;
    display: flex;
    justify-content: space-between;
    i, b { width: 24px; border-bottom: 1px solid #b5b5b5; }
    i { border-right: 1px solid #b5b5b5; }
    b { border-left: 1px solid #b5b5b5; }
`;

const selected = css`
    background: #c6c6c6;
    white-space: nowrap;
`;

const FirstLine = styled.div`
    ${selected}
    height: 42px;
    margin-left: 28px;
    display: grid;
    grid-template-columns: 360px 1fr;
`;

const Paragraph = styled.div`
    width: 552px;
`;

const Line = styled.div`
    ${selected}
    height: 42px;
    text-align-last: justify;
    &:nth-child(even) { height: 41px; }
`;

const LastLine = styled.div`
    ${selected}
    width: fit-content;
    height: 57px;
`;

const Question = styled(LastLine)`
    height: 56px;
    margin-left: 28px;
`;

const EmptyLine = styled(LastLine)`
    height: 42px;
    line-height: 42px;
`;

const Heading = styled(LastLine)`
    padding-right: 8px;
    font-size: 27px;
    line-height: 42px;
    font-weight: 400;
`;

const Latin = styled.span`
    margin: 0 6px;
    font: 22px "Liberation Serif", serif;
`;

const ReturnMark = styled.svg`
    width: 8px;
    height: 10px;
`;

const ScrollRail = styled.div`
    width: 15px;
    flex: none;
    padding: 8px 0 8px;
    display: flex;
    flex-direction: column;
    align-items: center;
    gap: 8px;
    color: #707070;
`;

const Thumb = styled.div`
    width: 8px;
    height: 95px;
    border-radius: 4px;
    background: #c9c9c5;
`;

const StylePane = styled.aside`
    width: 263px;
    flex: none;
    padding: 12px 16px 8px 17px;
    display: flex;
    flex-direction: column;
    border: 1px solid #cfcfca;
    border-width: 0 1px;
`;

const PaneHead = styled.div`
    height: 24px;
    padding: 0 2px 0 3px;
    display: flex;
    align-items: center;
    gap: 6px;
    font-size: 14px;
    button + button { margin-left: 4px; }
`;

const StyleSelect = styled(Dropdown)`
    flex: none;
    height: 32px;
    margin-top: 12px;
    border: 1px solid #c6c6c2;
    border-bottom-color: #9a9a98;
    border-radius: 4px;
    background: #fff;
    font-size: 16px;
    color: #000;
    select { padding-left: 8px; }
    svg { margin-right: 6px; color: #333; }
`;

const ButtonRow = styled.div`
    display: flex;
    gap: 8px;
    margin-top: 8px;
`;

const Caption = styled.p`
    margin: 17px 0 8px;
`;

const StyleBox = styled.div`
    flex: 1;
    padding: 8px;
    display: flex;
    flex-direction: column;
    gap: 4px;
    border: 1px solid #c6c6c2;
    border-radius: 4px;
    background: #fff;
`;

const StyleItem = styled.button`
    height: 32px;
    padding: 0 6px 0 5px;
    display: flex;
    align-items: center;
    justify-content: space-between;
    border-radius: 5px;
    color: #000;
    font-size: ${p => p.$size}px;
    background: ${p => p.$active ? "#e5e5e5" : "none"};
    svg { color: #333; }
    ${p => p.$bold && css`
        font-family: "DejaVu Sans Mono", "Noto Sans CJK SC", monospace;
        font-weight: 700;
    `}
`;

const ShowRow = styled.div`
    display: flex;
    align-items: center;
    gap: 7px;
    margin-top: 8px;
`;

const ShowSelect = styled(StyleSelect)`
    flex: 1;
    margin-top: 0;
    font-size: 12px;
`;

const PreviewRow = styled.div`
    height: 16px;
    margin-top: 11px;
    display: flex;
    align-items: center;
    gap: 4px;
    input { width: 14px; height: 14px; margin: 0; accent-color: #0f6bff; }
    a {
        margin: 0 7px 0 4px;
        color: #3c68ff;
        font-size: 14px;
        text-decoration: none;
    }
`;

const SideBar = styled.aside`
    width: 55px;
    flex: none;
    padding-top: 23px;
    display: flex;
    flex-direction: column;
    align-items: center;
    gap: 8px;
`;

const Dash = styled.i`
    width: 14px;
    height: 2px;
    margin-bottom: 7px;
    background: #999996;
`;

const SideButton = styled(PlainButton)`
    width: 32px;
    height: 32px;
    border-radius: 6px;
    color: #3a3a3a;
    background: ${p => p.$active ? "#cfcfc9" : "none"};
`;

/* status bar */

const StatusBar = styled.footer`
    height: 24px;
    flex: none;
    padding: 0 14px 0 16px;
    display: flex;
    align-items: center;
    gap: 13px;
    border-top: 1px solid #c8c8c4;
`;

const SpellButton = styled(PlainButton)`
    gap: 6px;
    margin-right: 1px;
`;

const ViewTools = styled.div`
    display: flex;
    align-items: center;
    gap: 8px;
    margin-right: 2px;
`;

const ViewButton = styled(PlainButton)`
    width: 24px;
    height: 22px;
    border-radius: 4px;
    background: ${p => p.$active ? "#cfcfcb" : "none"};
`;

const ZoomTools = styled.div`
    display: flex;
    align-items: center;
    gap: 6px;
`;

const ZoomButton = styled(PlainButton)`
    gap: 12px;
    margin-right: 8px;
`;

const ZoomRange = styled.input`
    width: 112px;
    height: 12px;
    margin: 0;
    appearance: none;
    background: linear-gradient(to right, #2453e0 ${p => p.value}%, #b8b8b4 ${p => p.value}%) center / 100% 2px no-repeat;
    &::-webkit-slider-thumb {
        appearance: none;
        width: 12px;
        height: 12px;
        border: 3px solid #fff;
        border-radius: 50%;
        background: #8a8a8a;
        box-shadow: 0 0 2px rgba(0, 0, 0, 0.4);
    }
`;

const Watermark = styled.div`
    position: absolute;
    right: 10px;
    bottom: 8px;
    display: flex;
    opacity: 0.75;
    pointer-events: none;
    div { display: flex; flex-direction: column; }
    strong { color: #4a8bd0; font-size: 21px; line-height: 24px; }
    em {
        color: #4fbf78;
        font: bold 16px/18px "Liberation Sans", sans-serif;
    }
`;

export default React.memo(App);
